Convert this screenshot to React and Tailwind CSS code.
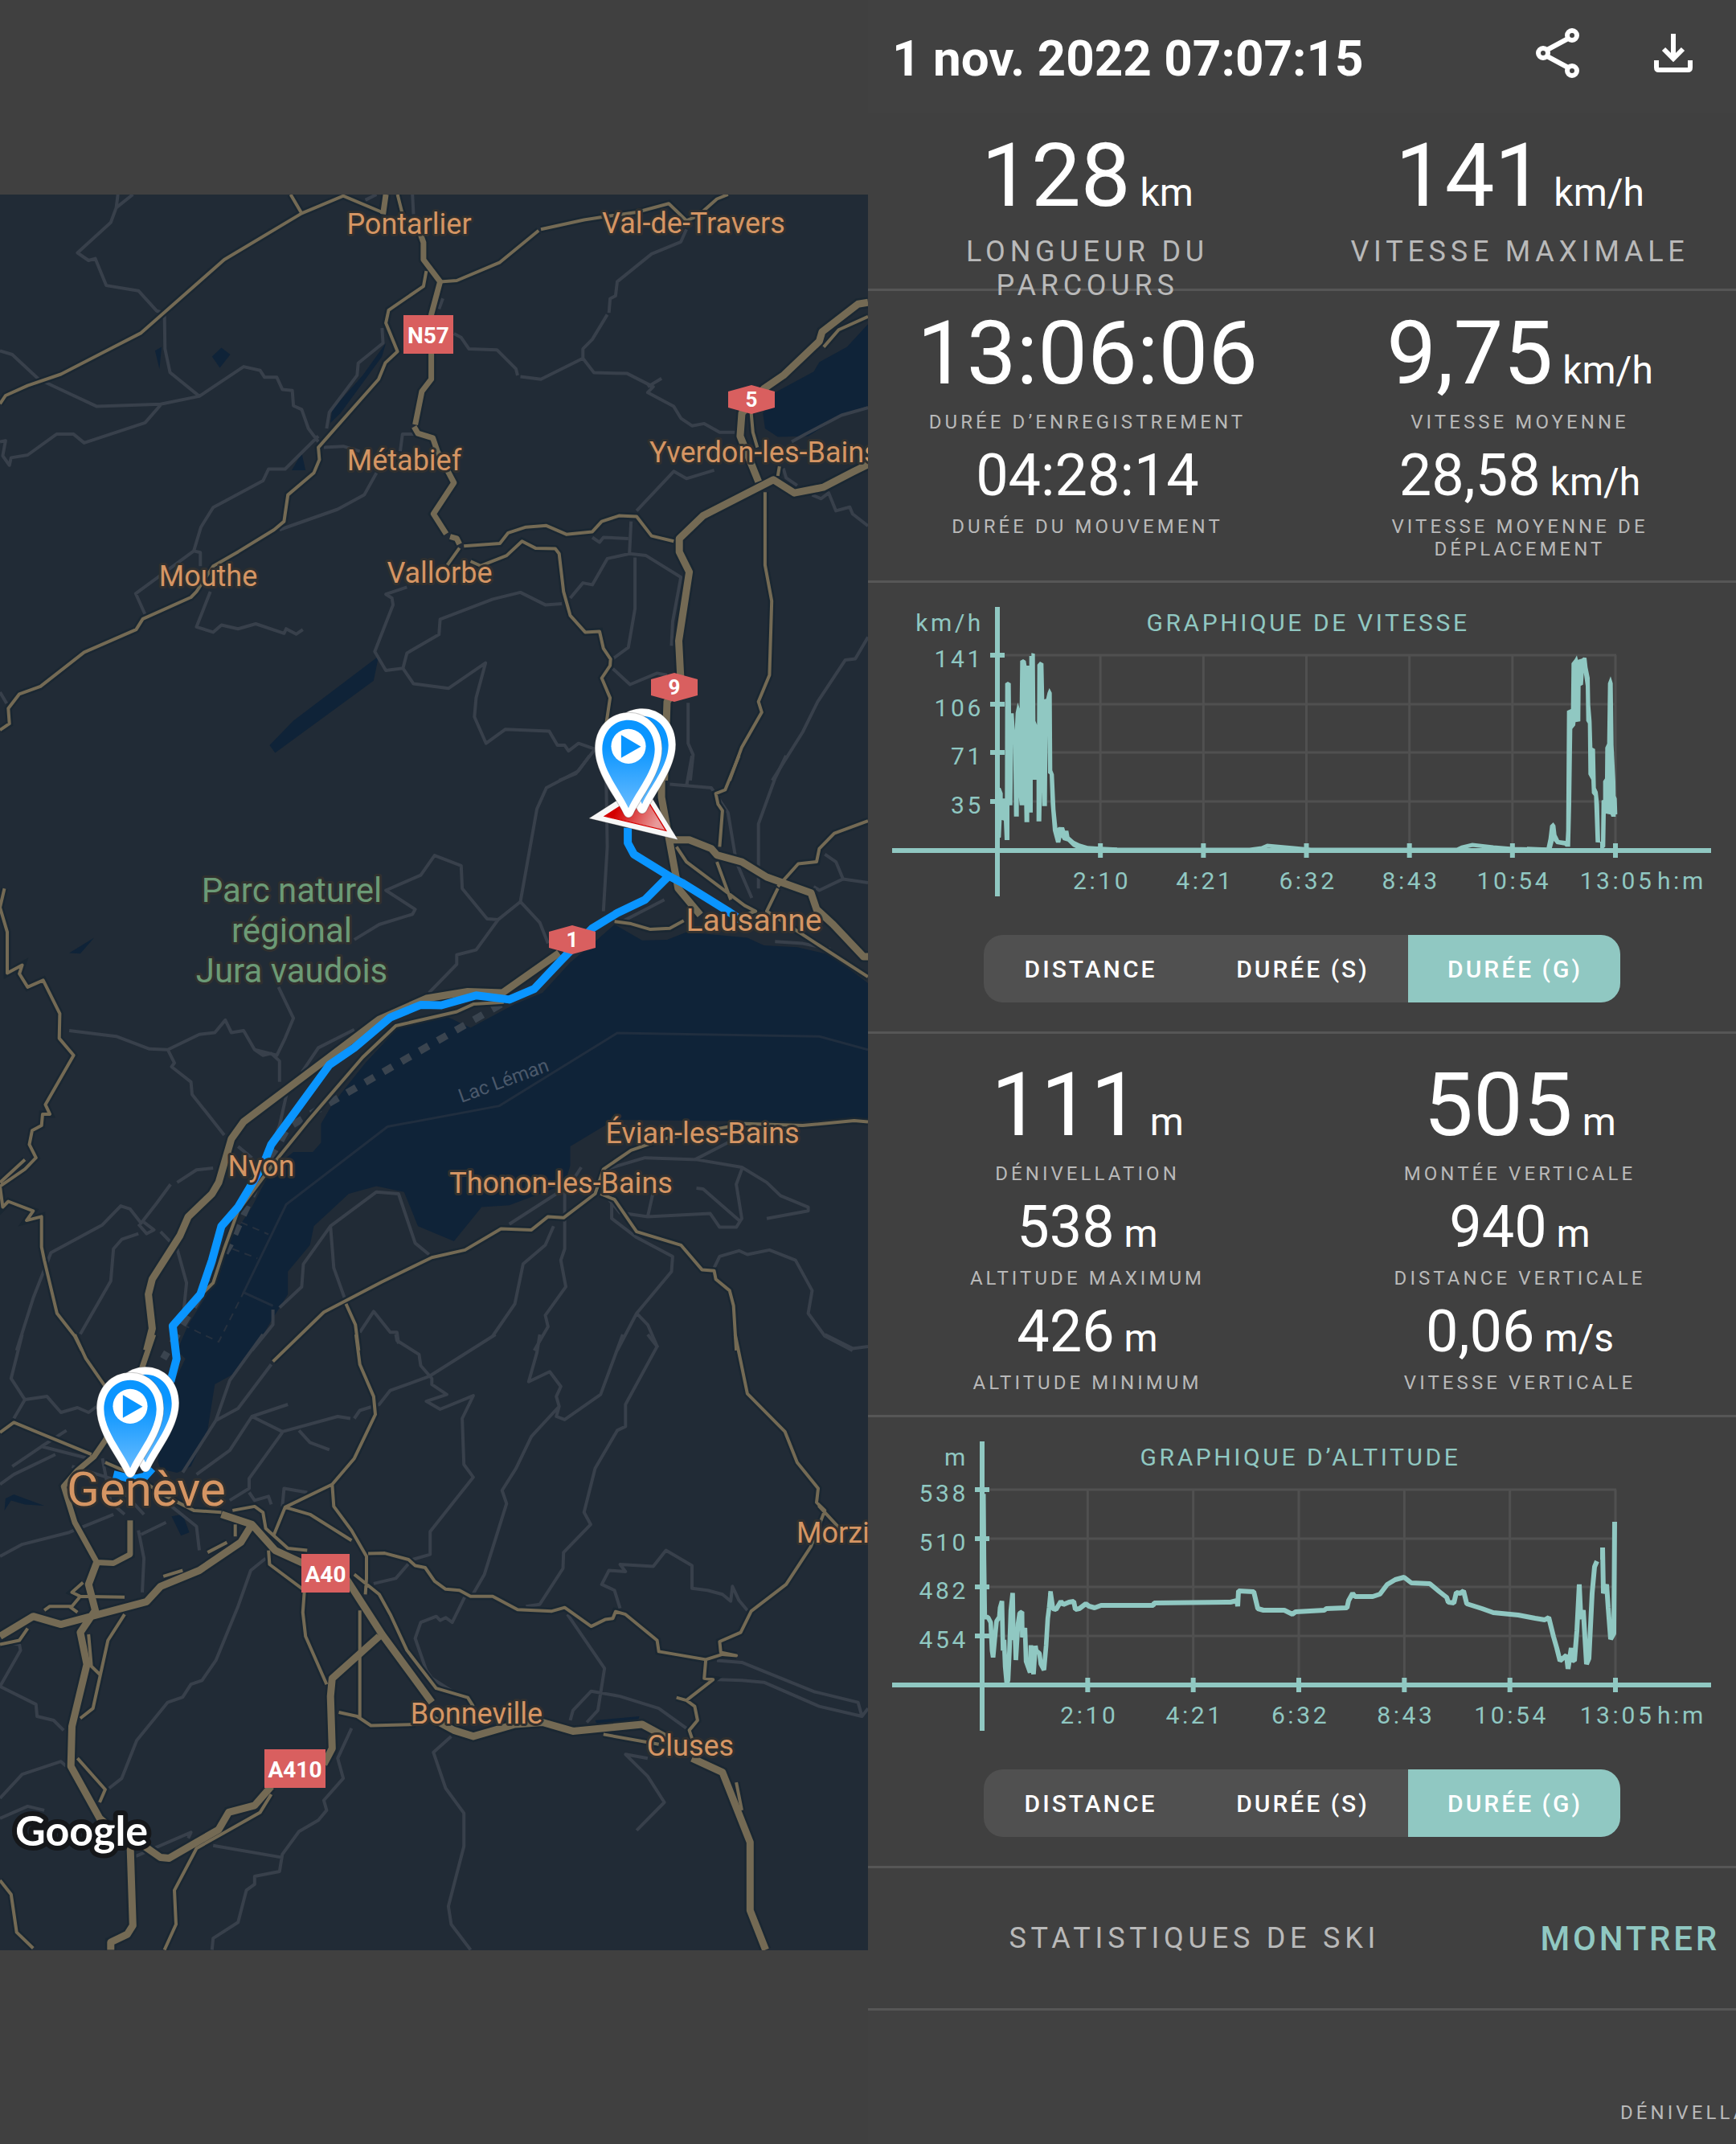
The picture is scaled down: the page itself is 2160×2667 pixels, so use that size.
import React, { useState } from "react";

/* ---------- Map data: three stacked tiles, each with its own coordinate grid ---------- */

const TILE_NORTH = { oy: -11, sx: 0.6888, sy: 0.4719 };
const TILE_LAKE = { oy: 698, sx: 0.6888, sy: 0.4719 };
const TILE_SOUTH = { oy: 1418, sx: 0.6888, sy: 0.4974 };

function toPath(lines, tile, close) {
  return lines
    .split(";")
    .map((line) => {
      const n = line.trim().split(/\s+/).map(Number);
      let d = "";
      for (let i = 0; i + 1 < n.length; i += 2) {
        d += (i ? "L" : "M") + (n[i] * tile.sx).toFixed(1) + " " + (n[i + 1] * tile.sy + tile.oy).toFixed(1);
      }
      return close ? d + "Z" : d;
    })
    .join("");
}

const WATER = [
  [TILE_NORTH, "697 415 690 450 615 600 597 625 600 590 655 500; 400 427 416 445 397 480 383 450; 292 425 280 435 288 483; 545 705 552 750 527 750; 684 1240 675 1305 497 1495 487 1475 530 1410; 1568 365 1530 425 1480 465 1470 490 1400 545 1378 600 1382 640 1405 662 1460 660 1520 605 1568 580"],
  [TILE_LAKE, "1568 600 1500 525 1440 505 1380 500 1350 480 1240 465 1205 485 1160 487 1110 445 1075 490 1030 545 980 625 930 655 850 717 810 690 720 715 660 810 600 920 580 970 580 1020 565 1045 530 1045 500 1080 480 1120 455 1190 410 1290 395 1370 370 1430 340 1500 320 1568 335 1590 318 1640 300 1715 285 1860 290 1880 320 1890 345 1873 375 1778 388 1657 420 1631 440 1589 478 1520 490 1490 520 1420 520 1360 560 1290 567 1240 630 1155 680 1135 730 1150 755 1240 820 1280 870 1190 920 1185 1020 1130 1030 1080 1030 1030 1110 960 1450 965 1568 955; 170 480 145 522 125 520"],
  [TILE_SOUTH, "310 455 330 450 342 495 327 503; 1075 965 1155 955 1150 975 1080 978; 8 440 10 410 25 400 80 428 45 425 20 415"],
];

const LANES = [
  [TILE_NORTH, "240 23 210 58 213 23; 210 58 200 97 140 177 160 197 172 192 192 263 250 277 283 330 297 335 298 430 307 492 360 555; 0 435 22 445 70 510 175 582 290 576 360 555 440 477 470 487 478 505 500 505 510 537 528 540 530 580 545 590 557 640 575 675; 290 578 262 625 152 678 133 655 102 655 50 710 20 717 17 737 5 712 10 672 0 675; 575 660 515 747 485 747 475 778 385 848 363 900 350 963 245 1075 262 1130; 350 963 362 967 362 1003; 380 1070 355 1163 385 1177 400 1158 430 1168 462 1155 513 1180 517 1168 535 1182 547 1170; 505 907 610 853 658 815 680 757; 690 375 692 415 647 468 645 500 595 597 590 640; 585 690 620 687 650 700; 820 390 833 400 847 430 898 433 932 483 935 500; 940 503 977 510 1053 455 1073 493 1133 495 1180 530 1170 545 1217 582 1230 613 1250 633 1272 627 1300 650 1330 650; 1195 508 1170 530; 1053 455 1053 430 1070 405 1097 340; 1100 335 1102 298 1112 290 1115 253 1177 180 1230 148 1240 115; 745 23 747 75; 660 38 680 23; 1568 585 1520 605 1455 655 1430 675; 1150 857 1217 753 1240 772 1290 750; 1415 745 1420 770 1440 790; 1467 815 1483 825 1497 810 1510 857 1535 847 1540 865 1568 897; 1140 885 1137 970 1097 983 1070 1052 1053 1047 1030 1087; 1137 970 1167 975 1230 1032 1215 1150 1213 1213; 1147 980 1147 1115 1135 1217 1107 1247; 1135 930 1090 927 1083 940 1070 927; 1015 1102 985 1105 940 1072 890 1090 795 1143 793 1183 735 1232 728 1272 697 1278 677 1228 710 1105 708 1087 697 1077 735 1058; 728 1272 747 1313 810 1325 877 1258 860 1350 857 1400 878 1470 913 1433 992 1438 1007 1475 1020 1475 1027 1490 1045 1470 1075 1485 1040 1550 1010 1568; 1107 1273 1138 1315 1187 1285 1205 1290; 1243 1363 1243 1470 1252 1500 1247 1568; 1568 1190 1545 1247 1527 1250 1477 1360 1450 1440 1395 1568; 0 1335 12 1365; 723 700 727 655 750 655; 800 297 793 325"],
  [TILE_LAKE, "1065 0 1045 40 987 85 970 140 940 385 900 432 860 512 825 525 825 550 775 625; 940 385 975 440 990 495; 900 432 880 430 835 350 833 290 785 263 760 315 697 355 750 405 745 418 685 445 640 485; 125 725 210 740 270 773 303 775 360 735 388 730 407 697 418 730 440 725 460 775 500 790 515 745 530 692 503 610; 303 775 315 810 310 820 345 860 347 893 405 1000; 460 775 475 790 490 785 505 805 505 860; 640 722 575 770 545 835; 518 890 505 975 490 1030; 430 1030 455 1060; 385 1087 355 1092 320 1125; 308 1130 283 1180 255 1232 235 1195 218 1187 185 1237 92 1310 60 1430 30 1568; 260 1230 278 1250 265 1260 250 1235; 290 1255 320 1300 337 1390 330 1490; 250 1260 220 1275 205 1300 200 1385 145 1525; 1095 60 1097 240 1090 410; 1240 80 1250 0; 1210 75 1285 85 1315 150 1330 280 1358 375; 1420 0 1400 60 1370 180 1370 350; 1490 260 1510 280 1523 325 1480 355 1470 345; 1523 325 1568 335; 1120 440 1160 410 1200 380; 1400 490 1450 495 1500 510; 1095 1090 1165 1060 1260 1065 1340 1085 1385 1125 1410 1160 1460 1190 1460 1200 1385 1220; 1340 1090 1330 1130 1340 1220 1330 1243 1300 1243 1283 1207 1170 1215 1120 1205 1100 1170; 1255 1065 1315 1020; 1258 1140 1270 1142 1335 1225; 1180 1150 1170 1215; 1050 1085 1030 1130; 1105 1175 1105 1220 1150 1270 1215 1320 1213 1360 1150 1470 1115 1568; 1150 1470 1170 1500 1188 1560; 1020 1150 1020 1300 1013 1330 1022 1400 985 1475 990 1505 965 1568; 1000 1240 985 1290 945 1340 930 1445 890 1530; 1010 1150 920 1235; 1290 1350 1300 1320 1335 1305 1350 1315 1390 1303 1437 1330 1467 1410 1460 1470 1490 1530 1540 1568; 505 1455 545 1400 548 1340 597 1240 680 1150 720 1155 750 1285 775 1315; 597 1240 603 1350 625 1440; 650 1520 675 1465 705 1520 717 1520 720 1550; 493 1460 493 1500 455 1568"],
  [TILE_SOUTH, "715 0 717 15 757 50 760 78 780 110 780 125 807 150 770 167 795 187 855 153 835 210 838 325 855 357 810 435 777 493 777 550 745 563; 895 0 775 105 705 140 685 175 650 190 640 210; 975 0 970 45 955 118 993 93 1013 130 1005 155 1010 180 960 255 932 335 907 390 915 423 875 600 852 655; 1125 0 1085 150 1020 213 1005 205 1010 180; 1170 0 1187 30 1130 175 1130 230 1115 240 1075 335 1055 445 1067 475 1018 545 1017 585 975 675 950 680; 1490 0 1540 35 1568 30; 840 655 817 720 805 708 795 715 788 705 760 720 750 760 770 840 780 860 820 895; 1025 700 1092 835 1080 940 1060 970; 1240 985 1190 935 1120 905 1068 892 1035 940 1030 965; 1350 690 1335 665 1323 630 1320 667 1305 650 1278 640 1250 635 1250 578 1203 540 1180 580 1120 575 1130 593 1100 590 1087 625 1110 640 1120 685; 1295 815 1340 820 1470 893 1550 920 1557 955 1480 930 1380 870 1340 865 1295 863; 1568 935 1557 955; 0 1160 40 1100 110 1068 120 1080; 0 1210 50 1180 80 1190; 0 555 40 525 125 495 205 450; 0 770 35 775 37 790 0 880 65 925 67 955 97 965 115 990; 480 560 453 590 430 680 390 815 365 865 345 875 330 907 303 920 247 1015 220 1110 197 1135; 0 375 25 350 100 300; 40 0 20 110 45 163 25 210; 45 163 85 155 110 195 140 183 160 195 175 180; 475 0 415 115 390 215 330 345; 490 75 430 185 390 215; 520 175 455 205 415 290 355 350; 455 205 510 243 610 205 633 210; 540 240 560 270 595 288; 510 245 450 360 450 385 415 415; 510 430 513 385 555 395; 250 490 260 560 257 645; 310 430 355 480 360 540; 300 470 255 500; 450 395 460 415 485 405 490 425; 740 570 715 610 675 623; 22 330 75 280 120 240; 75 280 160 310; 635 985 610 1060 620 1110 585 1165 590 1190 575 1215 540 1243 510 1300 505 1343 460 1355 460 1375 445 1390 430 1470 385 1510 383 1539; 385 1278 510 1308; 815 1005 783 1045 805 1135 838 1197 838 1280 810 1430 815 1475 850 1539; 1170 1060 1130 1050 1170 1105 1200 1170 1150 1240; 245 1305 345 1245 340 1260; 185 310 200 420 225 450; 130 330 200 360 260 450"],
];

const ROADS_THIN = [
  [TILE_NORTH, "0 575 10 553 50 527 110 497 203 427 255 388 300 330 405 195 545 73 620 27 690 70; 525 23 545 73; 718 23 727 75; 770 225 765 265 702 328 697 362 718 437 696 467 684 510 575 690 577 722 567 757 520 815 513 885 495 907 430 965 385 1003 355 1070 345 1085 258 1142 246 1170 152 1230 73 1320 35 1340 15 1378 17 1418 0 1435; 795 253 825 250 903 202 973 118; 977 115 1055 90 1090 82 1150 70 1208 47 1240 92 1260 80 1295 35 1315 23; 1568 345 1515 380 1488 425; 1357 600 1360 650 1368 690; 1408 740 1405 765; 1382 808 1382 1000 1394 1095 1390 1290 1370 1360 1376 1388 1340 1480 1318 1568; 838 950 903 943 918 915 950 900 987 896 1023 919 1070 912 1087 885 1118 870 1150 872 1177 923 1217 937; 830 955 808 1000; 850 990 868 1002 915 975 943 937 968 956 1003 957 1010 970 1018 1070 1030 1133 1057 1177 1083 1175 1090 1220 1103 1248 1102 1265 1087 1298 1102 1350 1095 1420"],
  [TILE_LAKE, "1110 437 1140 443 1175 458 1210 455 1235 435; 910 650 855 655 825 675 715 712 655 795 555 965 505 1055 430 1200 405 1300 385 1390 350 1440; 1222 240 1240 280 1345 395 1365 410 1345 420; 1295 280 1320 380; 1405 350 1385 410 1480 500 1568 583; 1335 0 1310 90 1293 100 1297 128 1305 145 1300 240; 1405 345 1442 285 1475 280 1480 245 1507 205 1568 172; 8 350 0 400 13 465 13 573 40 552 35 575 50 610 78 592 108 680 107 745 133 790 82 920 90 945 77 945 75 975 58 988 53 1025 65 1060 45 1090 0 1135 5 1190 15 1175 60 1200 48 1225 75 1215 75 1295 80 1330 103 1470 135 1530 148 1568; 0 1125 45 1065; 1568 965 1543 962 1450 975 1345 970 1200 1010 1140 1040 1090 1090 1075 1155 1018 1218 990 1215 960 1250 905 1247 840 1303 780 1323 690 1387 585 1467 493 1597; 625 1445 642 1500 648 1568; 1085 1155 1110 1170 1150 1255 1230 1290 1268 1355 1290 1358 1293 1380 1318 1410 1325 1450 1330 1568"],
  [TILE_SOUTH, "135 0 155 60 190 130; 643 0 650 75 675 155 678 200 640 310 600 375 515 432 495 500; 1328 0 1350 148 1418 243 1440 320 1478 385 1475 420 1490 440 1465 530 1420 625 1357 692 1338 745 1300 768 1302 795 1330 803 1305 800 1275 813 1190 793 1187 765 1130 700 1112 693 1107 710 1093 713 1068 730 1020 683 997 692 935 688 890 655 850 655 830 640 805 637 785 617 768 583 750 578 738 563 695 547 665 548; 1490 440 1480 430 1520 490; 80 690 90 680 130 680 145 655 130 645 150 620; 0 775 35 765 50 735; 125 680 140 695; 140 655 225 657; 225 700 195 765 168 935 145 960; 160 750 165 830 180 850; 140 1060 190 1138 180 1170; 60 240 165 300; 0 245 25 220 60 240; 300 405 350 440 400 445; 420 440 460 430 475 445 480 485 520 535 555 540; 515 432 560 450 635 515; 600 375 603 430 635 490 662 555 662 610 660 650; 485 540 487 575 550 640 547 695 552 755 590 875; 650 690 650 960; 640 600 685 650 705 700 735 790 788 885 845 908 855 930; 612 945 645 955 670 978 750 975; 490 1150 470 1195 355 1285 315 1390 318 1475 297 1539; 0 1365 20 1400 30 1495 60 1535; 1275 813 1272 860 1288 863 1240 915 1222 908; 1240 915 1255 930 1260 965 1245 990 1250 1010; 1330 1120 1340 1190; 1090 1000 1190 1025; 375 545 410 520; 295 605 330 590; 425 475 425 505; 190 320 240 350 300 405"],
];

const ROADS_MAIN = [
  [TILE_NORTH, "697 23 692 75; 760 130 765 150 765 195 795 253 779 340 779 510 762 542 750 630; 748 635 755 653 782 665 790 700 820 783 783 865 806 918; 813 925 825 930 830 945"],
  [TILE_SOUTH, "277 0 255 90 190 265 170 305 140 340 115 380 135 470 175 570 205 572 235 550 235 465"],
];

const MOTORWAYS = [
  [TILE_NORTH, "1568 308 1550 312 1485 385 1480 410 1415 500 1380 535 1340 600 1337 660 1370 780; 1568 735 1540 755 1487 795 1435 810 1397 775 1270 870 1227 930 1227 965 1245 1018 1226 1200 1230 1310 1205 1360 1200 1568"],
  [TILE_LAKE, "1195 60 1195 110 1210 230 1225 350 1265 420; 1210 222 1245 222 1285 245 1295 262 1340 280 1385 320 1465 362 1475 405 1505 445 1560 530 1568 530; 1010 520 908 625 845 622 770 640 685 695 590 800 440 965 418 1010 395 1125 383 1155 340 1215 325 1265 275 1380 268 1420 275 1510 265 1568"],
  [TILE_SOUTH, "0 755 60 705 110 725 265 668 290 630 360 590 435 520 455 475; 400 450 455 475 497 540 560 580 625 610 690 750 780 920; 685 755 600 860 597 905 600 1035 585 1075; 780 960 820 990 855 1005 930 975 980 970 1035 992 1160 975 1200 1005 1225 1030; 1250 1060 1305 1095 1355 1270 1355 1440 1383 1539; 490 1130 460 1178 413 1195 395 1238 305 1310 290 1308 235 1255; 235 1270 240 1478 230 1500 200 1520 200 1539; 175 570 160 625 172 690 145 745 157 825 130 980 128 1080 180 1210 230 1270"],
];

const LAKE_BORDER = "1568 775 1480 740 1115 731 902 923 700 978 517 1183 440 1415 493 1450";
const FERRY = "905 655 590 920 520 980 470 1110 415 1290 330 1500 295 1590";
const WATER_LIMITS = "435 1230 485 1262; 420 1300 465 1325; 330 1500 395 1545 440 1415";
const ROUTE = "1134 190 1134 230 1145 260 1208 317 1165 380 1115 415 1070 455 1010 545 965 615 920 643 860 632 797 658 760 657 705 690 640 770 595 815 490 1025 475 1080 430 1190 400 1240 383 1330 362 1420 312 1503 319 1590 308 1650; 1208 317 1232 335 1315 410 1345 440";

function Layer({ data, ...props }) {
  return data.map(([tile, lines], i) => <path key={i} d={toPath(lines, tile)} fill="none" {...props} />);
}

const TOWNS = [
  ["Pontarlier", 509, 49],
  ["Val-de-Travers", 863, 48],
  ["Métabief", 503, 343],
  ["Mouthe", 259, 487],
  ["Vallorbe", 547, 483],
  ["Nyon", 325, 1221],
  ["Évian-les-Bains", 874, 1180],
  ["Thonon-les-Bains", 698, 1242],
  ["Bonneville", 593, 1902],
  ["Cluses", 859, 1942],
];

function Pin({ x, y }) {
  return (
    <g transform={`translate(${x} ${y}) scale(0.337)`}>
      <path d="M0 0C-8 0-12-4-17-12C-50-80-124-165-124-255C-124-332-70-388 0-388C70-388 124-332 124-255C124-165 50-80 17-12C12-4 8 0 0 0Z" fill="#fff" stroke="#00000033" strokeWidth="3" />
      <path d="M0-35C-30-100-97-175-97-252C-97-315-55-360 0-360C55-360 97-315 97-252C97-175 30-100 0-35Z" fill="url(#pinFill)" />
      <circle cx="0" cy="-263" r="64" fill="#fff" />
      <path d="M-27-305V-220L46-262Z" fill="#0a95ff" />
    </g>
  );
}

function HexShield({ x, y, label }) {
  return (
    <g>
      <path d={`M${x - 29} ${y - 10}L${x} ${y - 18}L${x + 29} ${y - 10}V${y + 10}L${x} ${y + 18}L${x - 29} ${y + 10}Z`} fill="#d95f5f" />
      <text x={x} y={y + 9} textAnchor="middle" fontSize="26" fontWeight="700" fill="#fff">{label}</text>
    </g>
  );
}

function RectShield({ x, y, w, label }) {
  return (
    <g>
      <rect x={x - w / 2} y={y - 24} width={w} height="48" fill="#d95f5f" />
      <text x={x} y={y + 11} textAnchor="middle" fontSize="28" fontWeight="700" fill="#fff">{label}</text>
    </g>
  );
}

function TrackMap() {
  return (
    <svg viewBox="0 0 1080 2184" className="block w-full" role="img" aria-label="Carte du parcours">
      <defs>
        <linearGradient id="pinFill" x1="0" y1="0" x2="0" y2="1">
          <stop offset="0.3" stopColor="#0a95ff" />
          <stop offset="1" stopColor="#66bbff" />
        </linearGradient>
        <linearGradient id="arrowFill" x1="0" y1="0" x2="1" y2="0.3">
          <stop offset="0.3" stopColor="#d40000" />
          <stop offset="1" stopColor="#e89a9a" />
        </linearGradient>
      </defs>
      <rect width="1080" height="2184" fill="#212b36" />
      {WATER.map(([tile, lines], i) => (
        <path key={i} d={toPath(lines, tile, true)} fill="#0f2338" />
      ))}
      <Layer data={LANES} stroke="#38404b" strokeWidth="4" strokeLinejoin="round" />
      <path d={toPath(LAKE_BORDER, TILE_LAKE)} fill="none" stroke="#202e3f" strokeWidth="3" />
      <path d={toPath(WATER_LIMITS, TILE_LAKE)} fill="none" stroke="#26313f" strokeWidth="2" strokeDasharray="9 7" />
      <path d={toPath(FERRY, TILE_LAKE)} fill="none" stroke="#3a444f" strokeWidth="9" strokeDasharray="13 13" />
      <Layer data={ROADS_THIN} stroke="#1a2732" strokeWidth="9" />
      <Layer data={ROADS_MAIN} stroke="#1a2732" strokeWidth="12" />
      <Layer data={MOTORWAYS} stroke="#1a2732" strokeWidth="14" />
      <Layer data={ROADS_THIN} stroke="#746a54" strokeWidth="4" strokeLinejoin="round" />
      <Layer data={ROADS_MAIN} stroke="#746a54" strokeWidth="7" strokeLinejoin="round" />
      <Layer data={MOTORWAYS} stroke="#746a54" strokeWidth="9" strokeLinejoin="round" />
      <path d={toPath(ROUTE, TILE_LAKE)} fill="none" stroke="#0a95ff" strokeWidth="10" strokeLinejoin="round" />
      <path d={toPath("205 350 240 362 262 355 275 335", TILE_SOUTH)} fill="none" stroke="#0a95ff" strokeWidth="10" />

      <g fontFamily="Roboto, sans-serif" fontSize="36" fill="#d59563" stroke="#30302f" strokeWidth="6" strokeLinejoin="round" paintOrder="stroke">
        {TOWNS.map(([name, x, y]) => (
          <text key={name} x={x} y={y} textAnchor="middle">{name}</text>
        ))}
        <text x="808" y="333">Yverdon-les-Bains</text>
        <text x="991" y="1677">Morzine</text>
        <text x="938" y="916" textAnchor="middle" fontSize="39">Lausanne</text>
        <text x="182" y="1631" textAnchor="middle" fontSize="60">Genève</text>
        <g fill="#6b9a76" fontSize="42" textAnchor="middle">
          <text x="363" y="880">Parc naturel</text>
          <text x="363" y="930">régional</text>
          <text x="363" y="980">Jura vaudois</text>
        </g>
      </g>
      <text x="574" y="1130" fontFamily="Roboto, sans-serif" fontSize="24" fill="#4b596b" transform="rotate(-20 574 1130)">Lac Léman</text>

      <g fontFamily="Roboto, sans-serif">
        <RectShield x={533} y={174} w={62} label="N57" />
        <RectShield x={405} y={1715} w={60} label="A40" />
        <RectShield x={367} y={1958} w={76} label="A410" />
        <HexShield x={935} y={255} label="5" />
        <HexShield x={839} y={613} label="9" />
        <HexShield x={712} y={927} label="1" />
      </g>

      <g transform="translate(700 608) scale(0.3333)">
        <path d="M98 504L301 374L431 584Z" fill="#f7f7f7" stroke="#00000040" strokeWidth="3" />
        <path d="M157 496L298 406L386 550Z" fill="url(#arrowFill)" stroke="#d40000" strokeWidth="4" />
      </g>
      <Pin x={799} y={770} />
      <Pin x={782} y={775} />
      <Pin x={181} y={1589} />
      <Pin x={162} y={1596} />

      <text x="19" y="2054" fontFamily="Lato, sans-serif" fontSize="52" fontWeight="700" fill="#fff" stroke="#15171a" strokeWidth="12" strokeLinejoin="round" paintOrder="stroke">Google</text>
    </svg>
  );
}

/* ---------- Statistics ---------- */

function Stat({ value, unit, label, large, wideLabel }) {
  return (
    <div className="flex flex-col items-center text-center">
      <p className={large ? "text-[110px] leading-[128px] whitespace-nowrap" : "text-[72px] leading-[84px] whitespace-nowrap"}>
        {value}
        {unit && <span className="text-5xl leading-none"> {unit}</span>}
      </p>
      <p
        className={
          wideLabel
            ? "mt-[9px] max-w-[440px] text-4xl leading-[42px] tracking-[0.16em] text-[#b9b9b9]"
            : "mt-[7px] max-w-[440px] text-2xl leading-[28px] tracking-[0.17em] text-[#b9b9b9]"
        }
      >
        {label}
      </p>
    </div>
  );
}

const X_LABELS = ["2:10", "4:21", "6:32", "8:43", "10:54", "13:05"];

function Chart({ title, unit, yLabels, axisX, children }) {
  const end = 930;
  const step = (end - axisX) / 6;
  const rows = [90, 151, 211, 272];
  return (
    <svg viewBox="0 0 1080 413" className="block w-full" role="img" aria-label={title}>
      <g stroke="#505050" strokeWidth="3">
        {rows.map((y) => (
          <line key={y} x1={axisX} x2={end + 1} y1={y} y2={y} />
        ))}
        {X_LABELS.map((l, i) => (
          <line key={l} x1={axisX + step * (i + 1)} x2={axisX + step * (i + 1)} y1="90" y2="333" />
        ))}
      </g>
      <g stroke="#90c8c2" strokeWidth="6" fill="none">
        <line x1={axisX} x2={axisX} y1="30" y2="390" />
        <line x1="30" x2="1049" y1="333" y2="333" />
        {rows.map((y) => (
          <line key={y} x1={axisX - 9} x2={axisX + 9} y1={y} y2={y} />
        ))}
        {X_LABELS.map((l, i) => (
          <line key={l} x1={axisX + step * (i + 1)} x2={axisX + step * (i + 1)} y1="324" y2="342" />
        ))}
      </g>
      {children}
      <g className="text-[30px] tracking-[0.12em]" fill="#90c8c2">
        <text x={(axisX + end) / 2 + 2} y="60" textAnchor="middle">{title}</text>
        <text x={axisX - 17} y="60" textAnchor="end">{unit}</text>
        {yLabels.map((l, i) => (
          <text key={l} x={axisX - 17} y={rows[i] + 15} textAnchor="end">{l}</text>
        ))}
        {X_LABELS.map((l, i) => (
          <text key={l} x={axisX + step * (i + 1) + 2} y="381" textAnchor="middle">{l}</text>
        ))}
        <text x="982" y="381">h:m</text>
      </g>
    </svg>
  );
}

function SpeedSeries() {
  return (
    <g fill="#90c8c2">
      <path
        transform="translate(150 75) scale(0.3333)"
        d="M33 540L45 540 53 560 53 580 61 580 62 150 72 144 83 150 84 262 94 262 98 325 101 260 109 222 116 243 118 66 129 60 139 66 142 84 152 84 152 48 160 48 160 37 173 40 175 290 181 305 182 80 192 69 205 76 208 210 215 208 220 185 227 168 236 185 238 475 244 490 250 620 257 690 262 686 282 687 286 700 298 700 302 722 320 738 340 748 370 757 418 760 480 763 480 772 340 772 315 760 295 740 278 735 272 725 268 745 252 745 240 700 232 600 228 490 222 485 220 345 218 608 200 608 199 555 197 665 179 665 179 510 165 510 165 632 152 632 152 668 134 668 133 605 116 605 113 575 113 647 95 647 92 375 89 605 78 605 78 735 60 735 57 662 49 660 46 725 33 730Z"
      />
      <path d="M276 332H475L490 330 497 327 530 330 551 332H733L739 329 752 326 778 329 802 331 845 332" fill="none" stroke="#90c8c2" strokeWidth="5" />
      <path
        transform="translate(820 75) scale(0.3333)"
        d="M0 760L73 763 80 730 86 680 98 669 106 680 110 715 120 735 144 738 146 700 149 253 164 246 166 75 178 60 186 46 190 62 205 58 210 53 222 55 226 90 234 130 236 230 241 290 244 390 254 395 257 540 264 555 269 600 273 742 276 740 278 587 284 585 284 515 291 505 292 390 299 375 302 150 312 124 320 150 323 380 330 515 331 570 335 580 337 638 331 640 331 648 315 648 312 640 294 636 292 760 284 767 273 765 273 745 256 743 250 570 242 560 240 510 229 490 227 300 221 290 219 160 212 110 209 155 200 160 199 292 181 295 180 307 169 320 165 600 161 760 144 760 140 755 110 750 100 738 92 768 0 772Z"
      />
    </g>
  );
}

function AltitudeSeries() {
  return (
    <g fill="none" stroke="#90c8c2" strokeWidth="6" strokeLinejoin="bevel">
      <path
        transform="translate(130 77) scale(0.3333)"
        strokeWidth="17"
        d="M41 55L43 300 46 515 58 515 68 535 73 640 77 665 83 600 90 530 100 515 103 480 110 455 114 640 118 600 122 700 128 765 133 750 138 640 143 490 150 425 153 600 158 560 162 675 170 540 176 500 185 495 186 590 196 555 200 680 215 722 218 620 228 728 235 622 238 640 250 650 255 690 267 712 275 620 281 520 286 480 292 418"
      />
      <path d="M227 218L230 238 234 239 240 229 243 233 250 230 256 229 258 239 263 238 271 232 275 235 282 237 290 234 355 234 356 231 451 230 459 228 460 235 461 216 480 217 485 238 492 240 518 240 522 242 528 245 532 242 568 240 570 238 596 237 598 228 603 219 606 223 628 223 637 220 646 208 656 202 667 199 676 206 699 207 711 217 720 224 722 230 729 231 732 218 737 219 741 216 745 232 764 238 778 243 809 246 830 250 842 252 847 249 853 273 857 287 861 303 869 296 871 313 875 287 876 302 879 303 882 266 885 208 887 251 890 240 894 307 897 300 901 219 904 186 907 179" />
      <path d="M914 177V162L915 219 919 208 921 237 924 276 928 269 929 130" />
    </g>
  );
}

const MODES = ["DISTANCE", "DURÉE (S)", "DURÉE (G)"];

function AxisToggle({ label }) {
  const [active, setActive] = useState(2);
  return (
    <div role="group" aria-label={label} className="mx-auto mt-[25px] mb-9 grid w-[792px] max-w-full grid-cols-3 overflow-hidden rounded-3xl bg-[#505050]">
      {MODES.map((mode, i) => (
        <button
          key={mode}
          type="button"
          aria-pressed={i === active}
          onClick={() => setActive(i)}
          className={
            i === active
              ? "h-[84px] bg-[#90c8c2] pl-[2px] text-[30px] font-medium tracking-widest"
              : "h-[84px] pl-[2px] text-[30px] font-medium tracking-widest"
          }
        >
          {mode}
        </button>
      ))}
    </div>
  );
}

function Header() {
  return (
    <header className="flex h-[141px] items-start bg-[#414141] pt-8 pr-12 pl-[30px]">
      <h1 className="text-[62px] leading-[82px] font-bold whitespace-nowrap">1 nov. 2022 07:07:15</h1>
      <div className="ml-auto flex gap-[84px]">
        <button type="button" aria-label="Partager" className="h-[68px] w-[60px]">
          <svg viewBox="0 0 60 68" className="block h-full w-full" fill="none" stroke="#fff" strokeWidth="6">
            <path d="M17 30L43 16M17 38L43 52" />
            <circle cx="48" cy="12" r="6" />
            <circle cx="12" cy="34" r="6" />
            <circle cx="48" cy="56" r="6" />
          </svg>
        </button>
        <button type="button" aria-label="Télécharger" className="h-[68px] w-[60px]">
          <svg viewBox="0 0 60 68" className="block h-full w-full" fill="none" stroke="#fff" strokeWidth="6" strokeLinejoin="round">
            <path d="M30 10V40M18 29L30 41L42 29" strokeLinejoin="miter" />
            <path d="M9 43V52Q9 55 12 55H48Q51 55 51 52V43" />
          </svg>
        </button>
      </div>
    </header>
  );
}

export default function App() {
  return (
    <div className="grid min-h-screen grid-cols-2 overflow-hidden bg-[#404040] font-['Roboto',sans-serif] text-white">
      <section className="flex flex-col justify-center">
        <TrackMap />
      </section>

      <main className="flex min-w-0 flex-col">
        <Header />

        <section className="grid h-[221px] grid-cols-2 border-b-[3px] border-[#565656] pt-[14px] pl-1">
          <Stat large wideLabel value="128" unit="km" label="LONGUEUR DU PARCOURS" />
          <Stat large wideLabel value="141" unit="km/h" label="VITESSE MAXIMALE" />
        </section>

        <section className="grid grid-cols-2 gap-y-[11px] border-b-[3px] border-[#565656] pt-[14px] pb-[25px] pl-1">
          <Stat large value="13:06:06" label="DURÉE D’ENREGISTREMENT" />
          <Stat large value="9,75" unit="km/h" label="VITESSE MOYENNE" />
          <Stat value="04:28:14" label="DURÉE DU MOUVEMENT" />
          <Stat value="28,58" unit="km/h" label="VITESSE MOYENNE DE DÉPLACEMENT" />
        </section>

        <section className="border-b-[3px] border-[#565656]">
          <Chart title="GRAPHIQUE DE VITESSE" unit="km/h" yLabels={["141", "106", "71", "35"]} axisX={161}>
            <SpeedSeries />
          </Chart>
          <AxisToggle label="Axe du graphique de vitesse" />
        </section>

        <section className="grid grid-cols-2 gap-y-[11px] border-b-[3px] border-[#565656] pt-[25px] pb-[26px] pl-1">
          <Stat large value="111" unit="m" label="DÉNIVELLATION" />
          <Stat large value="505" unit="m" label="MONTÉE VERTICALE" />
          <Stat value="538" unit="m" label="ALTITUDE MAXIMUM" />
          <Stat value="940" unit="m" label="DISTANCE VERTICALE" />
          <Stat value="426" unit="m" label="ALTITUDE MINIMUM" />
          <Stat value="0,06" unit="m/s" label="VITESSE VERTICALE" />
        </section>

        <section className="border-b-[3px] border-[#565656]">
          <Chart title="GRAPHIQUE D’ALTITUDE" unit="m" yLabels={["538", "510", "482", "454"]} axisX={142}>
            <AltitudeSeries />
          </Chart>
          <AxisToggle label="Axe du graphique d’altitude" />
        </section>

        <section className="flex h-[177px] items-center border-b-[3px] border-[#565656]">
          <h2 className="flex-1 text-center text-4xl tracking-[0.16em] text-[#b9b9b9]">STATISTIQUES DE SKI</h2>
          <button type="button" className="pr-5 pl-6 text-[42px] font-medium tracking-[0.09em] text-[#90c8c2]">MONTRER</button>
        </section>

        <section className="flex-1 overflow-hidden bg-[#414141] pt-[113px] pl-[936px]">
          <p className="text-2xl leading-[28px] tracking-[0.17em] whitespace-nowrap text-[#b9b9b9]">DÉNIVELLATION</p>
        </section>
      </main>
    </div>
  );
}
